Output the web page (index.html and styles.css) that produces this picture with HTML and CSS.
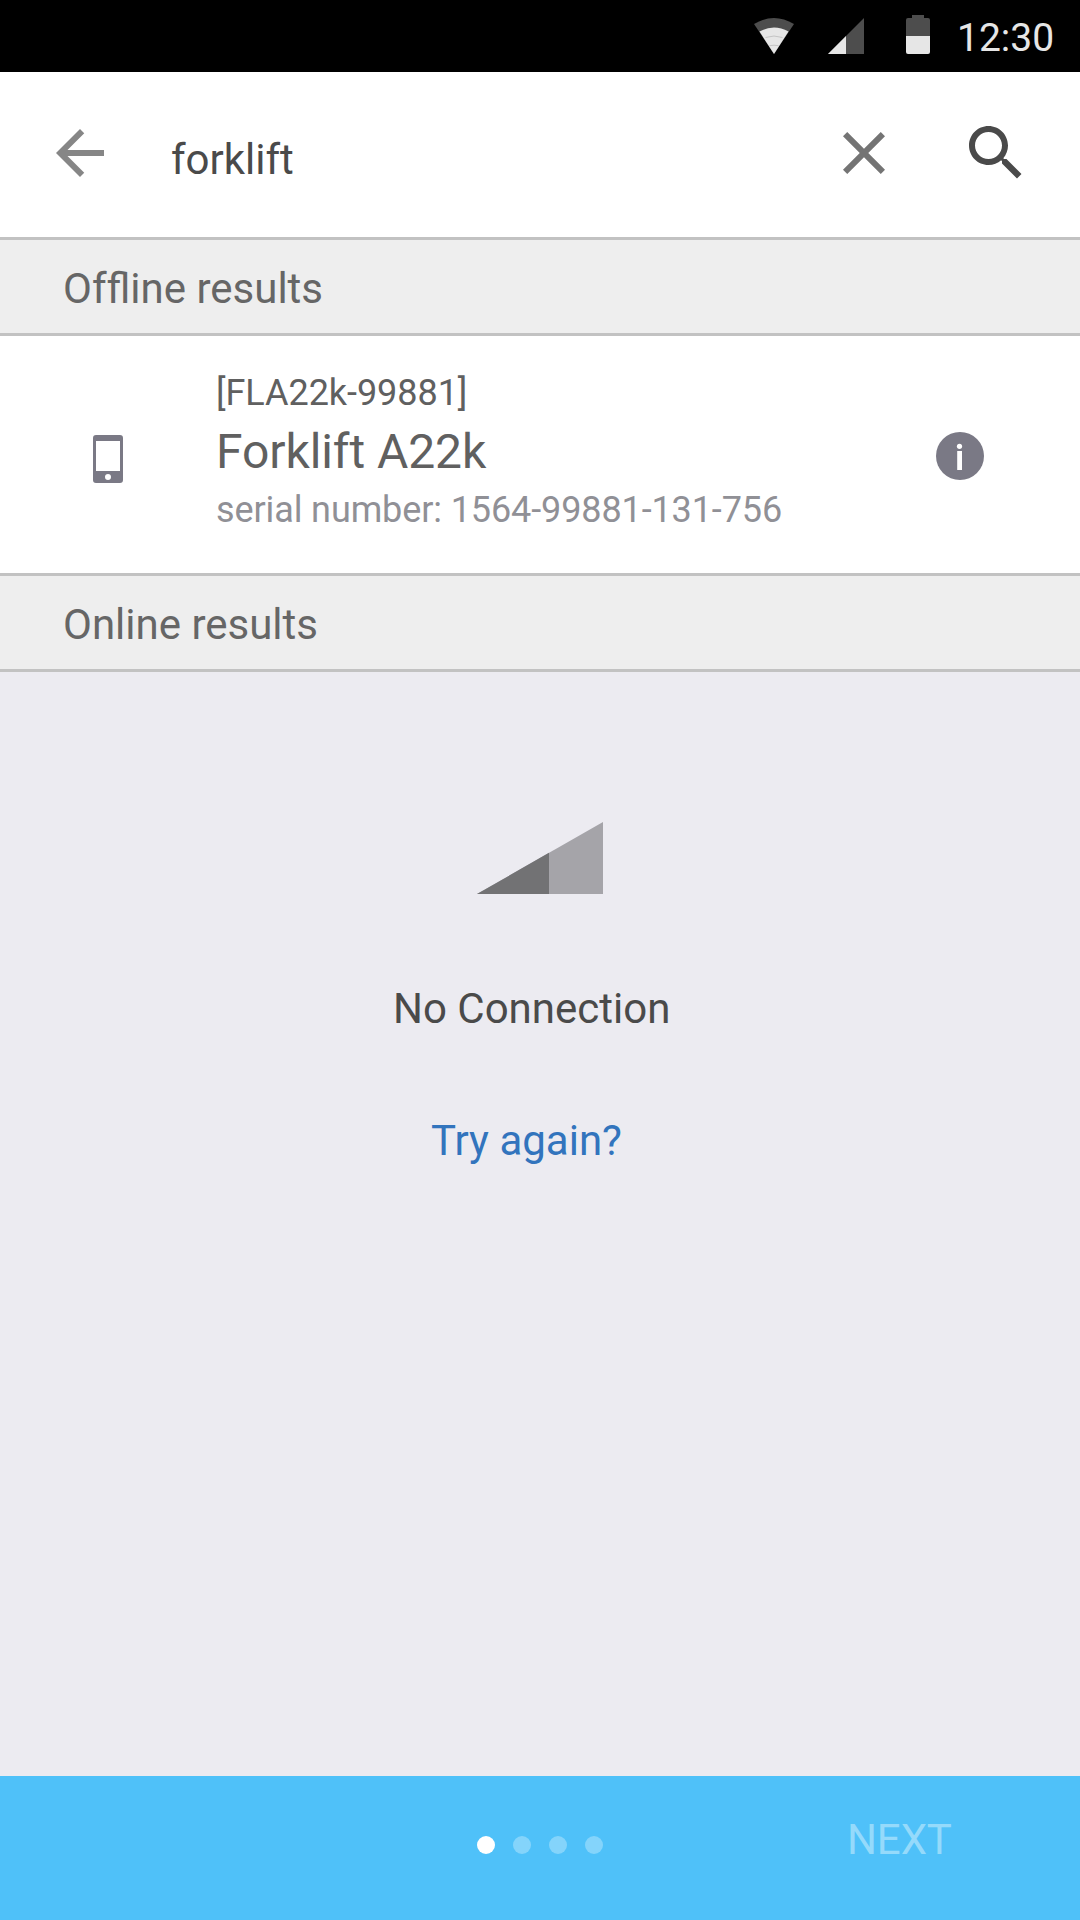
FILE: index.html
```html
<!DOCTYPE html>
<html lang="en">
<head>
<meta charset="utf-8">
<title>Search results</title>
<link rel="stylesheet" href="styles.css">
</head>
<body>
<div class="screen">
  <div class="status-bar">
    <svg class="wifi" width="40" height="36" viewBox="0 0 40 36"><path fill="#4d4d4d" d="M0 6Q20-6 40 6L20 36z"/><path fill="#e6e6e6" d="M5.500 13.500Q20 5.500 34.500 13.500L20 36z"/><path fill="none" stroke="#c4c4c4" d="M11.500 19.500Q20 16.500 28.500 19.500M15.500 27.700Q20 26.700 24.500 27.700"/></svg>
    <svg class="signal" width="36" height="36" viewBox="0 0 36 36"><path fill="#4d4d4d" d="M0 36L36 0v36z"/><path fill="#e6e6e6" d="M0 36l18-18v18z"/></svg>
    <svg class="battery" width="24" height="39" viewBox="0 0 24 39"><path fill="#4d4d4d" d="M6 0h12v3h4q2 0 2 2v16H0V5q0-2 2-2h4z"/><path fill="#e6e6e6" d="M0 21h24v16q0 2-2 2H2q-2 0-2-2z"/></svg>
    <span class="time">12:30</span>
  </div>
  <header class="toolbar">
    <svg class="icon back" viewBox="0 0 24 24"><path d="M20 11H7.830l5.590-5.590L12 4l-8 8 8 8 1.410-1.410L7.830 13H20z"/></svg>
    <span class="query">forklift</span>
    <svg class="icon clear" viewBox="0 0 24 24"><path d="M19 6.410L17.590 5 12 10.590 6.410 5 5 6.410 10.590 12 5 17.590 6.410 19 12 13.410 17.590 19 19 17.590 13.410 12z"/></svg>
    <svg class="icon search" viewBox="0 0 24 24"><path d="M15.500 14h-.79l-.28-.27C15.410 12.590 16 11.110 16 9.500 16 5.910 13.090 3 9.500 3S3 5.910 3 9.500 5.910 16 9.500 16c1.610 0 3.090-.59 4.230-1.570l.27.28v.79l5 4.990L20.490 19l-4.990-5zm-6 0C7.010 14 5 11.990 5 9.500S7.010 5 9.500 5 14 7.010 14 9.500 11.990 14 9.500 14z"/></svg>
  </header>
  <h2 class="section">Of&zwnj;fline results</h2>
  <article class="result">
    <svg class="phone" width="30" height="48" viewBox="0 0 30 48"><path fill="#7a7985" fill-rule="evenodd" d="M3 0h24a3 3 0 0 1 3 3v42a3 3 0 0 1-3 3H3a3 3 0 0 1-3-3V3a3 3 0 0 1 3-3zM3 6v30h24V6zM15 39a3 3 0 1 0 0 6 3 3 0 0 0 0-6z"/></svg>
    <div class="details">
      <div class="code">[FLA22k-99881]</div>
      <div class="name">Forklift A22k</div>
      <div class="serial">serial number: 1564-99881-131-756</div>
    </div>
    <svg class="info" width="48" height="48" viewBox="0 0 48 48"><circle cx="24" cy="24" r="24" fill="#7a7985"/><circle cx="23.500" cy="14.300" r="2.600" fill="#fff"/><path fill="#fff" d="M21.200 19h4.800v19h-4.800z"/></svg>
  </article>
  <h2 class="section">Online results</h2>
  <main class="empty">
    <svg class="no-signal" width="126" height="72" viewBox="0 0 126 72"><path fill="#a5a4a9" d="M0 72L126 0v72z"/><path fill="#727274" d="M0 72l72-41.140V72z"/></svg>
    <p class="message">No Connection</p>
    <a class="retry">Try again?</a>
  </main>
  <footer class="pager">
    <div class="dots"><i class="dot active"></i><i class="dot"></i><i class="dot"></i><i class="dot"></i></div>
    <span class="next">NEXT</span>
  </footer>
</div>
</body>
</html>
```
FILE: styles.css
```css
* { box-sizing: border-box; margin: 0; padding: 0; }
body { font-family: Roboto, sans-serif; font-weight: 400; background: #ecebf1; white-space: nowrap; }
svg { display: block; flex: none; }
.screen { width: 1080px; height: 1920px; display: flex; flex-direction: column; }

.status-bar { height: 72px; flex: none; background: #000; display: flex; align-items: flex-start; padding-left: 754px; }
.wifi { margin-top: 18px; }
.signal { margin: 18px 0 0 34px; }
.battery { margin: 15px 0 0 42px; }
.time { margin: 14px 0 0 27px; font-size: 39px; line-height: 48px; color: #e6e6e6; }

.toolbar { height: 168px; flex: none; background: #fff; border-bottom: 3px solid #c2c2c2; display: flex; padding: 45px 48px 0 44px; }
.icon { width: 72px; height: 72px; }
.back { fill: #868686; }
.clear { fill: #747474; margin-right: 60px; }
.search { fill: #4a4a4a; }
.query { flex: 1; margin: 19px 0 0 55px; font-size: 42px; line-height: 48px; color: #4a4a4a; }

.section { height: 96px; flex: none; background: #eee; border-bottom: 3px solid #c2c2c2; padding: 25px 0 0 63px; font-size: 42px; font-weight: 400; line-height: 48px; color: #666; }

.result { height: 240px; flex: none; background: #fff; border-bottom: 3px solid #c2c2c2; display: flex; padding: 0 96px 0 93px; }
.phone { margin-top: 99px; }
.details { flex: 1; padding: 33px 0 0 93px; }
.code { font-size: 36px; line-height: 48px; letter-spacing: -0.05px; color: #606060; }
.name { font-size: 48px; line-height: 70px; letter-spacing: -0.08px; color: #606060; }
.serial { margin-top: -1px; font-size: 36px; line-height: 48px; letter-spacing: -0.11px; color: #909096; }
.info { margin-top: 96px; }

.empty { flex: 1; display: flex; flex-direction: column; align-items: flex-start; }
.no-signal { margin: 150px 0 0 477px; }
.message { margin: 91px 0 0 393px; font-size: 42px; line-height: 48px; color: #4a4a4a; }
.retry { margin: 84px 0 0 431px; font-size: 42px; line-height: 48px; color: #3274bd; }

.pager { height: 144px; flex: none; background: #4fc1f9; display: flex; padding-left: 477px; }
.dots { display: flex; gap: 18px; padding-top: 60px; }
.dot { width: 18px; height: 18px; border-radius: 50%; background: #84d4fb; }
.active { background: #fff; }
.next { margin: 40px 0 0 244px; font-size: 42px; line-height: 48px; letter-spacing: -0.1px; color: #95dafb; }
```
